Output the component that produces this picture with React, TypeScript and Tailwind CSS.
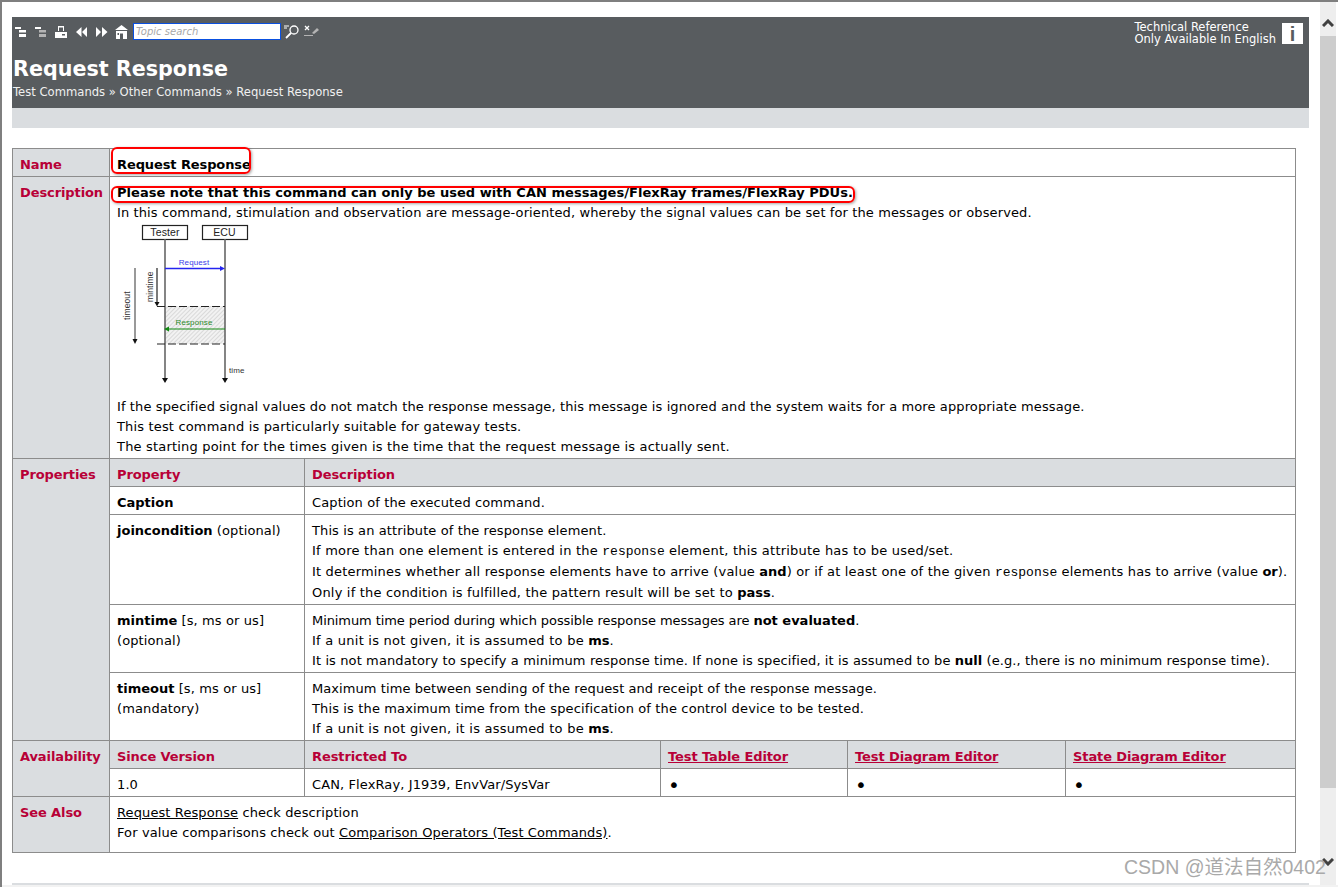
const verdana = "font-['DejaVu_Sans',Verdana,sans-serif]"

function Code({ children }: { children: string }) {
  return <code className="font-['Liberation_Mono',monospace] text-[13px] tracking-normal">{children}</code>
}

function B({ children }: { children: React.ReactNode }) {
  return <b className="tracking-normal">{children}</b>
}

function Mark({ children, className }: { children: React.ReactNode; className: string }) {
  return (
    <span className="relative inline-block">
      {children}
      <span className={`absolute rounded-[6px] border-2 border-[#f00] shadow-[1px_1px_3px_rgba(0,0,0,0.35)] ${className}`} />
    </span>
  )
}

function Label({ children, rowSpan }: { children: string; rowSpan?: number }) {
  return (
    <td rowSpan={rowSpan} className="border border-[#8c8c8c] bg-[#dadde0] px-[7px] pt-[6px] pb-[1px] align-top font-bold tracking-[-0.1px] text-[#b80037]">
      {children}
    </td>
  )
}

function Cell({ children, colSpan }: { children: React.ReactNode; colSpan?: number }) {
  return (
    <td colSpan={colSpan} className="border border-[#8c8c8c] px-[7px] pt-[6px] pb-[1px] align-top text-black">
      {children}
    </td>
  )
}

function Head({ children, colSpan }: { children: React.ReactNode; colSpan?: number }) {
  return (
    <td colSpan={colSpan} className="border border-[#8c8c8c] bg-[#dadde0] px-[7px] pt-[6px] pb-[1px] align-top font-bold tracking-[-0.1px] text-[#b80037]">
      {children}
    </td>
  )
}

function Dot() {
  return <div className="h-[20px] text-[20px] leading-[20px]">•</div>
}

function SequenceDiagram() {
  return (
    <svg width="132" height="164" viewBox="0 0 132 164" className="mt-[-2px] block">
      <defs>
        <pattern id="hatch" width="3" height="3" patternUnits="userSpaceOnUse" patternTransform="rotate(45)">
          <rect width="3" height="3" fill="#f2f2f2" />
          <line x1="0" y1="0" x2="0" y2="3" stroke="#cfcfcf" strokeWidth="1.4" />
        </pattern>
      </defs>
      <rect x="25.500" y="4.500" width="45" height="14" fill="#fff" stroke="#222" strokeWidth="1.200" />
      <rect x="85.500" y="4.500" width="45" height="14" fill="#fff" stroke="#222" strokeWidth="1.200" />
      <text x="48" y="15" textAnchor="middle" fontSize="10.500" fontFamily="Liberation Sans" fill="#222">Tester</text>
      <text x="107.500" y="15" textAnchor="middle" fontSize="10.500" fontFamily="Liberation Sans" fill="#222">ECU</text>
      <rect x="48" y="85" width="60" height="38" fill="url(#hatch)" />
      <line x1="48" y1="18" x2="48" y2="158" stroke="#666" strokeWidth="1.600" />
      <line x1="108" y1="18" x2="108" y2="158" stroke="#666" strokeWidth="1.600" />
      <path d="M45 157h6l-3 5z M105 157h6l-3 5z" fill="#111" />
      <line x1="48" y1="47.500" x2="104" y2="47.500" stroke="#2424f0" strokeWidth="1.500" />
      <path d="M103 45l5 2.500-5 2.500z" fill="#2424f0" />
      <text x="77" y="44" textAnchor="middle" fontSize="8" fontFamily="Liberation Sans" fill="#3a3ae8">Request</text>
      <line x1="40" y1="47" x2="40" y2="82" stroke="#222" strokeWidth="1.200" />
      <path d="M37.500 81h5l-2.500 4.500z" fill="#111" />
      <line x1="18" y1="47" x2="18" y2="119" stroke="#555" strokeWidth="1.200" />
      <path d="M15.500 118h5l-2.500 5z" fill="#111" />
      <text transform="translate(36 81) rotate(-90)" fontSize="8.500" fontFamily="Liberation Sans" fill="#333">mintime</text>
      <text transform="translate(13 99) rotate(-90)" fontSize="8.500" fontFamily="Liberation Sans" fill="#333">timeout</text>
      <line x1="40" y1="85.500" x2="108" y2="85.500" stroke="#222" strokeWidth="1.200" strokeDasharray="8 3" />
      <line x1="40" y1="123" x2="108" y2="123" stroke="#222" strokeWidth="1.200" strokeDasharray="8 3" />
      <line x1="52" y1="108" x2="108" y2="108" stroke="#138a13" strokeWidth="1.200" />
      <path d="M52 105.500l-5 2.500 5 2.500z" fill="#138a13" />
      <text x="77" y="104" textAnchor="middle" fontSize="8" fontFamily="Liberation Sans" fill="#2a8a2a">Response</text>
      <text x="112" y="152" fontSize="8" fontFamily="Liberation Sans" fill="#333">time</text>
    </svg>
  )
}

function ToolbarIcons() {
  return (
    <div className="flex items-center">
      {/* collapse / expand tree */}
      <svg width="12" height="12" viewBox="0 0 12 12" className="ml-[3px] fill-white">
        <path d="M0 1h6v2H0zM4 4h7v2.500H4zM4 8h7v3H4z" />
      </svg>
      <svg width="12" height="12" viewBox="0 0 12 12" className="ml-[8px]">
        <path d="M0 1h6v2H0z" fill="#fff" />
        <path d="M4 4h7v2.500H4zM4 8h7v3H4z" fill="#b4b4b4" />
      </svg>
      {/* print */}
      <svg width="12" height="12" viewBox="0 0 12 12" className="ml-[8px] fill-white">
        <path d="M3 0h6v5H8V1.500H4V5H3zM0 6h12v6H0zm7 2v1.500h3V8z" fillRule="evenodd" />
      </svg>
      {/* back / forward */}
      <svg width="12" height="12" viewBox="0 0 12 12" className="ml-[9px] fill-white">
        <path d="M5.500 1v10L0 6zM11 1v10L6 6z" />
      </svg>
      <svg width="12" height="12" viewBox="0 0 12 12" className="ml-[8px] fill-white">
        <path d="M0 1v10l5-5zM6 1v10l5.500-5z" />
      </svg>
      {/* home */}
      <svg width="13" height="14" viewBox="0 0 13 14" className="ml-[7px] fill-white">
        <path d="M6.500 0L13 5H0zM1 6h11v8H8V8.500H5V14H1zM2.500 8v2H4V8z" fillRule="evenodd" />
      </svg>
      <div className="ml-[5px] flex h-[17px] w-[148px] items-center border-[1px] border-[#0a50e0] bg-white pl-[2px] font-['DejaVu_Sans',sans-serif] text-[10px] text-[#a8a8a8] italic">
        Topic search
      </div>
      {/* search */}
      <svg width="16" height="15" viewBox="0 0 16 15" className="ml-[3px]">
        <circle cx="10" cy="6" r="4" fill="none" stroke="#fff" strokeWidth="1.300" />
        <path d="M7 9l-5 5" stroke="#fff" strokeWidth="1.800" />
        <path d="M0 2h5M0 4h3" stroke="#fff" />
      </svg>
      {/* clear search */}
      <svg width="16" height="14" viewBox="0 0 16 14" className="ml-[4px]">
        <path d="M1 1l4 4M5 1L1 5" stroke="#fff" strokeWidth="1.300" />
        <path d="M8 8l5-5 2 2-5 4z" fill="#b4b4b4" />
        <path d="M0 10.500h9" stroke="#b4b4b4" />
      </svg>
    </div>
  )
}

export default function App() {
  return (
    <div className={`relative h-[887px] w-[1338px] overflow-hidden border-t-2 border-l-2 border-[#7f7f7f] bg-white text-[13px] leading-[20px] ${verdana}`}>
      <div className="flex">
        <div className="w-[1318px] pt-[15px] pl-[10px]">
          <div className="w-[1297px]">
            {/* header */}
            <div className="flex h-[91px] justify-between bg-[#585c5f] text-white">
              <div>
                <div className="mt-[6px] h-[18px]">
                  <ToolbarIcons />
                </div>
                <h1 className="mt-[14px] ml-[1px] text-[20.670px] leading-[28px] font-bold">Request Response</h1>
                <div className="mt-[1px] ml-[1px] text-[11.600px] leading-[16px] text-[#f0f0f0]">
                  Test Commands » Other Commands » Request Response
                </div>
              </div>
              <div className="mt-[6px] mr-[6px] flex items-start text-[11.500px] leading-[12px]">
                <div className="mt-[-2px] mr-[6px]">
                  Technical Reference
                  <br />
                  Only Available In English
                </div>
                <div className="flex h-[21px] w-[21px] items-center justify-center bg-white font-['Liberation_Sans',sans-serif] text-[20px] font-bold text-[#585c5f]">
                  i
                </div>
              </div>
            </div>
            <div className="h-[20px] bg-[#dadde0]" />

            {/* topic table */}
            <table className="mt-[20px] w-[1284px] table-fixed border-collapse tracking-[0.11px]">
              <colgroup>
                <col className="w-[97px]" />
                <col className="w-[195px]" />
                <col className="w-[356px]" />
                <col className="w-[187px]" />
                <col className="w-[218px]" />
                <col />
              </colgroup>
              <tbody>
                <tr>
                  <Label>Name</Label>
                  <Cell colSpan={5}>
                    <Mark className="-top-[8px] right-0 bottom-[1px] -left-[6px]">
                      <b className="tracking-[-0.1px]">Request Response</b>
                    </Mark>
                  </Cell>
                </tr>
                <tr>
                  <Label>Description</Label>
                  <Cell colSpan={5}>
                    <Mark className="top-[3px] -right-[2px] bottom-0 -left-[6px]">
                      <b className="tracking-[0.03px]">Please note that this command can only be used with CAN messages/FlexRay frames/FlexRay PDUs.</b>
                    </Mark>
                    <div>In this command, stimulation and observation are message-oriented, whereby the signal values can be set for the messages or observed.</div>
                    <SequenceDiagram />
                    <div className="mt-[12px]">If the specified signal values do not match the response message, this message is ignored and the system waits for a more appropriate message.</div>
                    <div className="tracking-[0.16px]">This test command is particularly suitable for gateway tests.</div>
                    <div className="tracking-[0.185px]">The starting point for the times given is the time that the request message is actually sent.</div>
                  </Cell>
                </tr>
                <tr>
                  <Label rowSpan={5}>Properties</Label>
                  <Head>Property</Head>
                  <Head colSpan={4}>Description</Head>
                </tr>
                <tr>
                  <Cell><B>Caption</B></Cell>
                  <Cell colSpan={4}>Caption of the executed command.</Cell>
                </tr>
                <tr>
                  <Cell><B>joincondition</B> (optional)</Cell>
                  <Cell colSpan={4}>
                    <div>This is an attribute of the response element.</div>
                    <div className="tracking-[0.22px]">If more than one element is entered in the <Code>response</Code> element, this attribute has to be used/set.</div>
                    <div className="tracking-[0.18px]">It determines whether all response elements have to arrive (value <B>and</B>) or if at least one of the given <Code>response</Code> elements has to arrive (value <B>or</B>).</div>
                    <div className="tracking-[0.185px]">Only if the condition is fulfilled, the pattern result will be set to <B>pass</B>.</div>
                  </Cell>
                </tr>
                <tr>
                  <Cell><B>mintime</B> [s, ms or us]<br />(optional)</Cell>
                  <Cell colSpan={4}>
                    <div className="tracking-[-0.08px]">Minimum time period during which possible response messages are <B>not evaluated</B>.</div>
                    <div className="tracking-[0.24px]">If a unit is not given, it is assumed to be <B>ms</B>.</div>
                    <div>It is not mandatory to specify a minimum response time. If none is specified, it is assumed to be <B>null</B> (e.g., there is no minimum response time).</div>
                  </Cell>
                </tr>
                <tr>
                  <Cell><B>timeout</B> [s, ms or us]<br />(mandatory)</Cell>
                  <Cell colSpan={4}>
                    <div className="tracking-[0.075px]">Maximum time between sending of the request and receipt of the response message.</div>
                    <div className="tracking-[0.135px]">This is the maximum time from the specification of the control device to be tested.</div>
                    <div className="tracking-[0.24px]">If a unit is not given, it is assumed to be <B>ms</B>.</div>
                  </Cell>
                </tr>
                <tr>
                  <Label rowSpan={2}>Availability</Label>
                  <Head>Since Version</Head>
                  <Head>Restricted To</Head>
                  <Head><u>Test Table Editor</u></Head>
                  <Head><u>Test Diagram Editor</u></Head>
                  <Head><u>State Diagram Editor</u></Head>
                </tr>
                <tr>
                  <Cell>1.0</Cell>
                  <Cell>CAN, FlexRay, J1939, EnvVar/SysVar</Cell>
                  <Cell><Dot /></Cell>
                  <Cell><Dot /></Cell>
                  <Cell><Dot /></Cell>
                </tr>
                <tr>
                  <Label>See Also</Label>
                  <Cell colSpan={5}>
                    <div className="mb-[8px]">
                      <div><u>Request Response</u> check description</div>
                      <div>For value comparisons check out <u>Comparison Operators (Test Commands)</u>.</div>
                    </div>
                  </Cell>
                </tr>
              </tbody>
            </table>
          </div>
        </div>

        {/* scrollbar */}
        <div className="flex h-[884px] w-[16px] flex-col items-center bg-[#eeeeee]">
          <svg width="12" height="8" viewBox="0 0 12 8" className="mt-[17px] mb-[9px]">
            <path d="M1 7l5-5 5 5" fill="none" stroke="#404040" strokeWidth="3" />
          </svg>
          <div className="h-[752px] w-full bg-[#cdcdcd]" />
          <svg width="12" height="8" viewBox="0 0 12 8" className="mt-[70px]">
            <path d="M1 1l5 5 5-5" fill="none" stroke="#404040" strokeWidth="3" />
          </svg>
        </div>
      </div>

      <div className="absolute bottom-[2px] left-[10px] h-[2px] w-[1297px] bg-[#dadde0]" />
      <div className="absolute bottom-0 left-[-2px] h-[2px] w-[1338px] bg-[#f2f2f2]" />
      <div className="absolute top-[853px] left-[1122px] font-['Liberation_Sans','Noto_Sans_CJK_SC',sans-serif] text-[19.500px] leading-[24px] whitespace-nowrap text-[#a9a9a9]">
        CSDN @道法自然0402
      </div>
    </div>
  )
}
